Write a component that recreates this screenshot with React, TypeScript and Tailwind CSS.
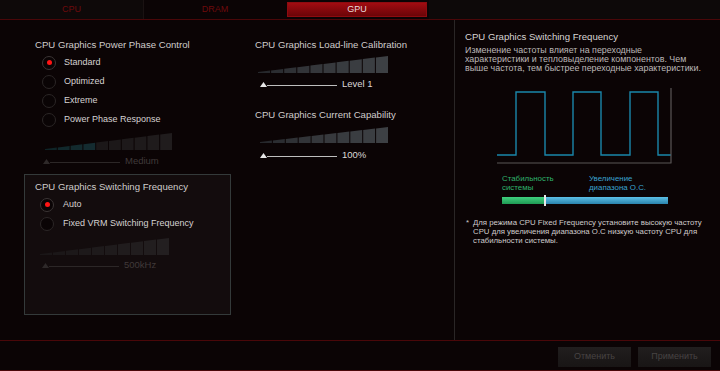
import React from "react";

function Bars({ w, h, colors }: { w: number; h: number; colors: string[] }) {
  const n = 10;
  const gap = 1;
  const bw = (w - gap * (n - 1)) / n;
  const top = (x: number) => h - 1 - (h - 1) * (x / w);
  return (
    <svg width={w} height={h} className="block">
      {Array.from({ length: n }).map((_, i) => {
        const x0 = i * (bw + gap);
        const x1 = x0 + bw;
        return (
          <polygon
            key={i}
            points={`${x0},${h} ${x0},${top(x0)} ${x1},${top(x1)} ${x1},${h}`}
            fill={colors[i]}
          />
        );
      })}
    </svg>
  );
}

function Slider({ label, disabled }: { label: string; disabled?: boolean }) {
  const c = disabled ? "#2c2727" : "#bdbdbd";
  return (
    <div className="flex items-center h-[12px]">
      <svg width={78} height={8} className="block">
        <polygon points="0,7 3.5,2 7,7" fill={disabled ? "#2e2929" : "#e6e6e6"} />
        <line x1={7} y1={5.5} x2={77} y2={5.5} stroke={c} strokeWidth={1} />
      </svg>
      <span className={`ml-[4px] text-[9.5px] ${disabled ? "text-[#403a3a]" : "text-[#dcd8d8]"}`}>{label}</span>
    </div>
  );
}

function Radio({ label, sel, gap }: { label: string; sel?: boolean; gap: number }) {
  return (
    <div className="flex items-center h-[19px]">
      <div
        className={`w-[14px] h-[14px] rounded-full border flex items-center justify-center bg-[#0a0405] ${
          sel ? "border-[#3b3535]" : "border-[#2b2626]"
        }`}
      >
        {sel && <div className="w-[5px] h-[5px] rounded-full bg-[#ff1414]" />}
      </div>
      <span style={{ marginLeft: gap }} className="text-[9px] text-[#d6d2d2]">
        {label}
      </span>
    </div>
  );
}

const enabledBars = ["#26282c", "#2b2d31", "#2f3135", "#323438", "#35373b", "#37393d", "#383b3f", "#3a3d41", "#3b3e42", "#3d4044"];
const dimBars = ["#0f2427", "#11282c", "#132a2e", "#142b30", "#1b1718", "#1c1819", "#1d191a", "#1e1a1b", "#1f1b1c", "#201c1d"];
const boxBars = ["#1a1617", "#1b1718", "#1c1819", "#1d191a", "#1e1a1b", "#1f1b1c", "#201c1d", "#211d1e", "#221e1f", "#231f20"];

export default function App() {
  return (
    <div className="w-[720px] h-[371px] bg-[#0b0405] flex flex-col overflow-hidden font-['Liberation_Sans',Arial,sans-serif]">
      {/* Tabs */}
      <div className="h-[19px] flex items-stretch border-b border-[#4a0709] box-content">
        <div className="w-[144px] flex items-center justify-center text-[9px] text-[#6e0a0c] bg-[#0e0909] border-r border-[#1a1212]">
          CPU
        </div>
        <div className="w-[142px] flex items-center justify-center text-[9px] text-[#6e0a0c]">DRAM</div>
        <div className="w-[143px] flex items-center py-[2px] pl-[1px] pr-[2px]">
          <div className="flex-1 h-full flex items-center justify-center text-[9px] text-[#e8dcdc] bg-gradient-to-b from-[#a10c11] to-[#6c0508] border border-[#8e0b10]">
            GPU
          </div>
        </div>
        <div className="flex-1 bg-[#0d0909]" />
      </div>

      {/* Main */}
      <div className="h-[320px] flex">
        <div className="w-[455px] flex border-r border-[#2a2626]">
          {/* Left column */}
          <div className="w-[231px] pl-[24px] pt-[19px] flex flex-col">
            <div className="pl-[11px] text-[9.6px] leading-[12px] text-[#d0cccc]">CPU Graphics Power Phase Control</div>
            <div className="pl-[18px] mt-[2px] flex flex-col">
              <Radio label="Standard" sel gap={8} />
              <Radio label="Optimized" gap={8} />
              <Radio label="Extreme" gap={8} />
              <Radio label="Power Phase Response" gap={8} />
            </div>
            <div className="pl-[21px] mt-[4px]">
              <Bars w={127} h={17} colors={dimBars} />
            </div>
            <div className="pl-[19px] mt-[5px]">
              <Slider label="Medium" disabled />
            </div>
            <div className="mt-[7px] w-[207px] h-[141px] border border-[#343a3a] bg-[#130c0d] flex flex-col pt-[6px]">
              <div className="pl-[10px] text-[9.6px] leading-[12px] text-[#d0cccc]">CPU Graphics Switching Frequency</div>
              <div className="pl-[15px] mt-[2px] flex flex-col">
                <Radio label="Auto" sel gap={9} />
                <Radio label="Fixed VRM Switching Frequency" gap={9} />
              </div>
              <div className="pl-[15px] mt-[5px]">
                <Bars w={129} h={17} colors={boxBars} />
              </div>
              <div className="pl-[17px] mt-[4px]">
                <Slider label="500kHz" disabled />
              </div>
            </div>
          </div>

          {/* Middle column */}
          <div className="flex-1 pl-[24px] pt-[19px] flex flex-col">
            <div className="text-[9.6px] leading-[12px] text-[#d0cccc]">CPU Graphics Load-line Calibration</div>
            <div className="pl-[3px] mt-[5px]">
              <Bars w={130} h={17} colors={enabledBars} />
            </div>
            <div className="pl-[5px] mt-[5px]">
              <Slider label="Level 1" />
            </div>
            <div className="mt-[19px] text-[9.6px] leading-[12px] text-[#d0cccc]">CPU Graphics Current Capability</div>
            <div className="pl-[5px] mt-[6px]">
              <Bars w={128} h={16} colors={enabledBars} />
            </div>
            <div className="pl-[5px] mt-[6px]">
              <Slider label="100%" />
            </div>
          </div>
        </div>

        {/* Right panel */}
        <div className="flex-1 flex flex-col pt-[11px]">
          <div className="pl-[10px] text-[9.6px] leading-[12px] text-[#d8d4d4]">CPU Graphics Switching Frequency</div>
          <div className="pl-[10px] mt-[3px] text-[8.9px] leading-[9px] text-[#bcb8b8] whitespace-nowrap">
            <div>Изменение частоты влияет на переходные</div>
            <div>характеристики и тепловыделение компонентов. Чем</div>
            <div>выше частота, тем быстрее переходные характеристики.</div>
          </div>
          <svg width={264} height={80} className="block mt-[12px]">
            <path
              d="M42 70 H61 V7 H90 V70 H118 V7 H146 V70 H175 V7 H203 V70 H216"
              fill="none"
              stroke="#1a86ab"
              strokeWidth={1.4}
            />
            <path d="M42 78 H216.5 M216 3 V78" fill="none" stroke="#5a5656" strokeWidth={1.2} />
          </svg>
          <div className="flex pl-[47px] mt-[9px] text-[7.9px] leading-[9px]">
            <div className="w-[87px] text-[#2fb36c]">
              <div>Стабильность</div>
              <div>системы</div>
            </div>
            <div className="text-[#3aa3cf]">
              <div>Увеличение</div>
              <div>диапазона О.С.</div>
            </div>
          </div>
          <div className="ml-[47px] mt-[5px] w-[166px] h-[7px] flex items-center">
            <div className="w-[42px] h-[7px] bg-gradient-to-b from-[#3fd07e] to-[#1f9a54]" />
            <div className="w-[2px] h-[11px] bg-[#e8e8e8]" />
            <div className="flex-1 h-[7px] bg-gradient-to-b from-[#5cc0e6] to-[#2a84ad]" />
          </div>
          <div className="mt-[14px] pl-[11px] flex text-[7.8px] leading-[9px] text-[#cfcbcb] whitespace-nowrap">
            <div className="w-[7px]">*</div>
            <div>
              <div>Для режима CPU Fixed Frequency установите высокую частоту</div>
              <div>CPU для увеличения диапазона О.С низкую частоту CPU для</div>
              <div>стабильности системы.</div>
            </div>
          </div>
        </div>
      </div>

      {/* Bottom */}
      <div className="flex-1 border-t border-b border-[#4a0709] flex justify-end items-start pt-[6px] pr-[9px] gap-[7px]">
        <div className="w-[73px] h-[20px] flex items-center justify-center bg-gradient-to-b from-[#211e1e] to-[#181515] text-[9px] text-[#474343]">
          Отменить
        </div>
        <div className="w-[73px] h-[20px] flex items-center justify-center bg-gradient-to-b from-[#211e1e] to-[#181515] text-[9px] text-[#474343]">
          Применить
        </div>
      </div>
    </div>
  );
}
